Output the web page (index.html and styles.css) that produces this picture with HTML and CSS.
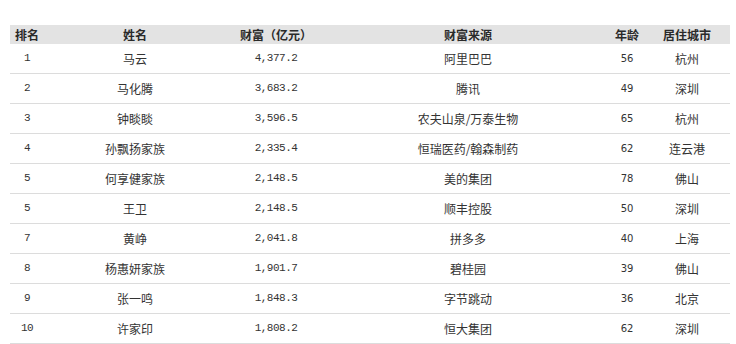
FILE: index.html
```html
<!DOCTYPE html>
<html>
  <head>
    <meta charset="utf-8">
    <link rel="stylesheet" href="styles.css">
    <title>富豪榜</title>
  </head>
  <body>
    <div class="wrap">
      <table class="rank">
        <colgroup>
          <col class="c-rank">
          <col class="c-name">
          <col class="c-money">
          <col class="c-source">
          <col class="c-age">
          <col class="c-city">
        </colgroup>
        <thead>
          <tr>
            <th>排名</th>
            <th>姓名</th>
            <th>财富（亿元）</th>
            <th>财富来源</th>
            <th>年龄</th>
            <th>居住城市</th>
          </tr>
        </thead>
        <tbody>
          <tr><td class="num">1</td><td>马云</td><td class="num">4,377.2</td><td>阿里巴巴</td><td class="age">56</td><td>杭州</td></tr>
          <tr><td class="num">2</td><td>马化腾</td><td class="num">3,683.2</td><td>腾讯</td><td class="age">49</td><td>深圳</td></tr>
          <tr><td class="num">3</td><td>钟睒睒</td><td class="num">3,596.5</td><td>农夫山泉/万泰生物</td><td class="age">65</td><td>杭州</td></tr>
          <tr><td class="num">4</td><td>孙飘扬家族</td><td class="num">2,335.4</td><td>恒瑞医药/翰森制药</td><td class="age">62</td><td>连云港</td></tr>
          <tr><td class="num">5</td><td>何享健家族</td><td class="num">2,148.5</td><td>美的集团</td><td class="age">78</td><td>佛山</td></tr>
          <tr><td class="num">5</td><td>王卫</td><td class="num">2,148.5</td><td>顺丰控股</td><td class="age">50</td><td>深圳</td></tr>
          <tr><td class="num">7</td><td>黄峥</td><td class="num">2,041.8</td><td>拼多多</td><td class="age">40</td><td>上海</td></tr>
          <tr><td class="num">8</td><td>杨惠妍家族</td><td class="num">1,901.7</td><td>碧桂园</td><td class="age">39</td><td>佛山</td></tr>
          <tr><td class="num">9</td><td>张一鸣</td><td class="num">1,848.3</td><td>字节跳动</td><td class="age">36</td><td>北京</td></tr>
          <tr><td class="num">10</td><td>许家印</td><td class="num">1,808.2</td><td>恒大集团</td><td class="age">62</td><td>深圳</td></tr>
        </tbody>
      </table>
    </div>
  </body>
</html>
```

FILE: styles.css
```css
body {
  margin: 0;
  background: #fff;
  font-family: "Noto Sans CJK SC", "Noto Sans", sans-serif;
  font-size: 12px;
  color: #333;
}

.wrap {
  padding: 25px 6px 0 10px;
}

table.rank {
  width: 720px;
  border-collapse: collapse;
  table-layout: fixed;
}

.c-rank { width: 34px; }
.c-name { width: 182px; }
.c-money { width: 100px; }
.c-source { width: 284px; }
.c-age { width: 34px; }
.c-city { width: 86px; }

table.rank th {
  background: #e3e3e3;
  height: 19px;
  padding: 0;
  font-weight: bold;
  color: #2a2a2a;
  text-align: center;
  line-height: 19px;
}

table.rank td {
  height: 29px;
  padding: 0;
  text-align: center;
  line-height: 29px;
  border-bottom: 1px solid #dcdcdc;
  white-space: nowrap;
}

/* rank and wealth figures use a fixed-width face */
table.rank td.num {
  font-family: "Liberation Mono", monospace;
  font-size: 11px;
  letter-spacing: -0.5px;
}

table.rank td.age {
  font-family: "DejaVu Sans", sans-serif;
  font-size: 10px;
}
```
